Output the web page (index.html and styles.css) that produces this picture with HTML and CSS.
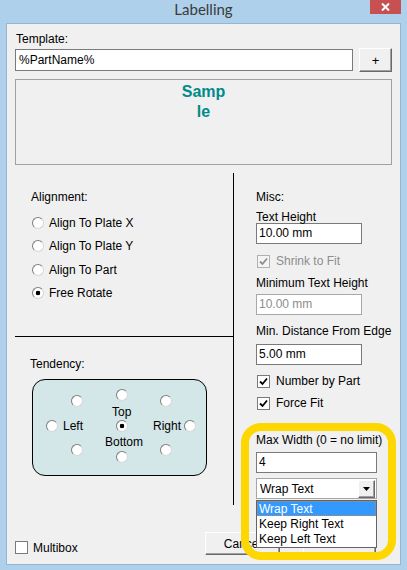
FILE: index.html
```html
<!DOCTYPE html>
<html>
<head>
<meta charset="utf-8">
<link rel="stylesheet" href="styles.css">
</head>
<body>
<div class="window">
  <div class="titlebar">
    <span></span>
    <span class="title">Labelling</span>
    <span class="close"><svg width="9" height="8" viewBox="0 0 9 8"><path d="M1 0.5 L8 7.5 M8 0.5 L1 7.5" stroke="#fff" stroke-width="2"/></svg></span>
  </div>
  <div class="client">
    <div class="lbl tpl-label">Template:</div>
    <div class="tpl-row">
      <div class="field tpl-input">%PartName%</div>
      <div class="btn plus">+</div>
    </div>
    <div class="preview"><div class="sample">Samp<br>le</div></div>
    <div class="middle">
      <div class="leftcol">
        <div class="align-sec">
          <div class="lbl">Alignment:</div>
          <div class="radio-list">
            <div class="opt"><span class="radio"></span>Align To Plate X</div>
            <div class="opt"><span class="radio"></span>Align To Plate Y</div>
            <div class="opt"><span class="radio"></span>Align To Part</div>
            <div class="opt"><span class="radio on"></span>Free Rotate</div>
          </div>
        </div>
        <div class="tend-sec">
          <div class="lbl">Tendency:</div>
          <div class="compass">
            <span class="radio c-tl"></span>
            <span class="radio c-t"></span>
            <span class="radio c-tr"></span>
            <span class="radio c-l"></span>
            <span class="radio on c-c"></span>
            <span class="radio c-r"></span>
            <span class="radio c-bl"></span>
            <span class="radio c-b"></span>
            <span class="radio c-br"></span>
            <span class="clbl t-top">Top</span>
            <span class="clbl t-left">Left</span>
            <span class="clbl t-right">Right</span>
            <span class="clbl t-bottom">Bottom</span>
          </div>
        </div>
      </div>
      <div class="rightcol">
        <div class="lbl">Misc:</div>
        <div class="lbl m6">Text Height</div>
        <div class="field w106 mneg1">10.00 mm</div>
        <div class="chk-row disabled m10"><span class="check"><svg width="11" height="11" viewBox="0 0 11 11"><path d="M2 5.5 L4.5 8 L9 2.5" fill="none" stroke="#8d8d8d" stroke-width="1.8"/></svg></span>Shrink to Fit</div>
        <div class="lbl m8">Minimum Text Height</div>
        <div class="field w106 m4 dis-text">10.00 mm</div>
        <div class="lbl m9">Min. Distance From Edge</div>
        <div class="field w106 m6">5.00 mm</div>
        <div class="chk-row m9"><span class="check"><svg width="11" height="11" viewBox="0 0 11 11"><path d="M2 5.5 L4.5 8 L9 2.5" fill="none" stroke="#000" stroke-width="1.8"/></svg></span>Number by Part</div>
        <div class="chk-row m8"><span class="check"><svg width="11" height="11" viewBox="0 0 11 11"><path d="M2 5.5 L4.5 8 L9 2.5" fill="none" stroke="#000" stroke-width="1.8"/></svg></span>Force Fit</div>
        <div class="lbl m23">Max Width (0 = no limit)</div>
        <div class="field w121 m5">4</div>
        <div class="combo m5">
          <span class="combo-text">Wrap Text</span>
          <span class="btn combo-btn"><svg width="7" height="4" viewBox="0 0 7 4"><path d="M0 0 H7 L3.5 4 Z" fill="#000"/></svg></span>
        </div>
      </div>
    </div>
    <div class="bottom">
      <div class="chk-row multibox"><span class="check"></span>Multibox</div>
      <div class="buttons">
        <div class="btn cancel">Cancel</div>
        <div class="btn other"></div>
      </div>
    </div>
  </div>
  <div class="dropdown">
    <div class="dd-item sel">Wrap Text</div>
    <div class="dd-item">Keep Right Text</div>
    <div class="dd-item">Keep Left Text</div>
  </div>
  <div class="highlight"></div>
</div>
</body>
</html>
```
FILE: styles.css
```css
* { box-sizing: border-box; margin: 0; padding: 0; }
html, body { width: 407px; height: 570px; overflow: hidden; }
body {
  font-family: "Liberation Sans", Arial, sans-serif;
  font-size: 12px;
  color: #000;
  background: #aed0eb;
}
.window { position: relative; width: 407px; height: 570px; background: #aed0eb; }

.titlebar {
  height: 23px;
  display: grid;
  grid-template-columns: 1fr auto 1fr;
  align-items: start;
}
.title {
  font-family: Lato, "Liberation Sans", sans-serif;
  font-size: 15px;
  line-height: 18px;
  color: #3a3a3a;
}
.close {
  justify-self: end;
  margin-right: 6px;
  width: 31px;
  height: 14px;
  background: #c75050;
  display: flex;
  align-items: center;
  justify-content: center;
}

.client {
  margin-left: 6px;
  width: 395px;
  height: 542px;
  border: 1px solid #94b6d3;
  background: #f0f0f0;
}

.lbl { line-height: 14px; white-space: nowrap; }
.tpl-label { margin: 8px 0 0 9px; }
.tpl-row { display: flex; align-items: center; gap: 6px; margin: 2px 0 0 8px; height: 24px; }

.field {
  background: #fff;
  border: 1px solid #7a7a7a;
  height: 21px;
  line-height: 19px;
  padding-left: 2px;
  white-space: nowrap;
  overflow: hidden;
}
.tpl-input { width: 338px; height: 22px; line-height: 20px; padding-left: 3px; }
.dis-text { color: #8d8d8d; border-color: #a8a8a8; }

.btn {
  background: #f0f0f0;
  border: 1px solid;
  border-color: #fff #696969 #696969 #fff;
  box-shadow: inset -1px -1px 0 #a0a0a0;
  display: flex;
  align-items: center;
  justify-content: center;
}
.plus { width: 33px; height: 24px; font-size: 13px; }

.preview { margin: 7px 0 0 8px; width: 377px; height: 86px; border: 1px solid #a0a0a0; }
.sample {
  font-weight: bold;
  font-size: 16px;
  line-height: 20px;
  color: #008a8a;
  text-align: center;
  padding-top: 2px;
}

.middle { display: flex; margin: 8px 0 0 8px; height: 332px; }
.leftcol { width: 219px; border-right: 1px solid #000; display: flex; flex-direction: column; }
.align-sec { height: 164px; border-bottom: 1px solid #000; padding: 17px 0 0 16px; }
.radio-list { margin: 7px 0 0 1px; }
.opt { display: flex; align-items: center; height: 23.5px; gap: 5px; white-space: nowrap; }

.radio {
  width: 12px;
  height: 12px;
  border-radius: 50%;
  background: #fff;
  border: 1px solid;
  border-color: #7d7d7d #d6d6d6 #d6d6d6 #7d7d7d;
  flex: none;
  display: inline-block;
}
.radio.on { background: radial-gradient(circle at center, #000 0 2px, #fff 2.6px); }

.tend-sec { flex: 1; padding: 20px 0 0 15px; }
.compass {
  position: relative;
  margin: 8px 0 0 2px;
  width: 175px;
  height: 97px;
  border: 1px solid #000;
  border-radius: 13px;
  background: #d3e6e8;
}
.compass .radio { position: absolute; }
.c-tl { left: 38px; top: 15px; }
.c-t  { left: 83px; top: 9px; }
.c-tr { left: 127px; top: 15px; }
.c-l  { left: 13px; top: 40px; }
.c-c  { left: 83px; top: 40px; }
.c-r  { left: 151px; top: 40px; }
.c-bl { left: 38px; top: 64px; }
.c-b  { left: 83px; top: 71px; }
.c-br { left: 127px; top: 64px; }
.clbl { position: absolute; line-height: 14px; white-space: nowrap; }
.t-top { left: 79px; top: 25px; }
.t-left { left: 30px; top: 39px; }
.t-right { left: 120px; top: 39px; }
.t-bottom { left: 72px; top: 55px; }

.rightcol { flex: 1; padding: 17px 0 0 22px; }
.w106 { width: 106px; }
.w121 { width: 121px; }
.m4 { margin-top: 4px; }
.m5 { margin-top: 5px; }
.m6 { margin-top: 6px; }
.m8 { margin-top: 8px; }
.m9 { margin-top: 9px; }
.m10 { margin-top: 10px; }
.m23 { margin-top: 23px; }
.mneg1 { margin-top: -1px; }

.chk-row { display: flex; align-items: center; gap: 6px; height: 14px; margin-left: 1px; white-space: nowrap; }
.check {
  width: 13px;
  height: 13px;
  background: #fff;
  border: 1px solid #7a7a7a;
  display: flex;
  align-items: center;
  justify-content: center;
  flex: none;
}
.disabled { color: #8d8d8d; }
.disabled .check { border-color: #b0b0b0; background: #f4f4f4; }

.combo {
  width: 121px;
  height: 21px;
  border: 1px solid #a6a6a6;
  background: #fff;
  display: flex;
  align-items: center;
}
.combo-text { flex: 1; padding-left: 3px; line-height: 19px; padding-top: 1px; }
.combo-btn { width: 17px; height: 18px; margin-right: 1px; }

.bottom { display: flex; margin-left: 8px; }
.multibox { margin-top: 36px; height: 13px; gap: 5px; margin-left: 0; }
.buttons { margin-left: auto; margin-right: 24px; margin-top: 27px; display: flex; gap: 23px; }
.cancel { width: 75px; height: 23px; }
.other { width: 73px; height: 23px; }

.dropdown {
  position: absolute;
  left: 256px;
  top: 500px;
  width: 121px;
  height: 48px;
  background: #fff;
  border: 1px solid #646464;
}
.dd-item { height: 15px; line-height: 17px; padding-left: 2px; white-space: nowrap; }
.dd-item.sel { background: #3399ff; color: #fff; outline: 1px dotted #c88a4a; outline-offset: -1px; }

.highlight {
  position: absolute;
  left: 241px;
  top: 423px;
  width: 155px;
  height: 137px;
  border: 8px solid #ffd700;
  border-radius: 20px;
}
```
